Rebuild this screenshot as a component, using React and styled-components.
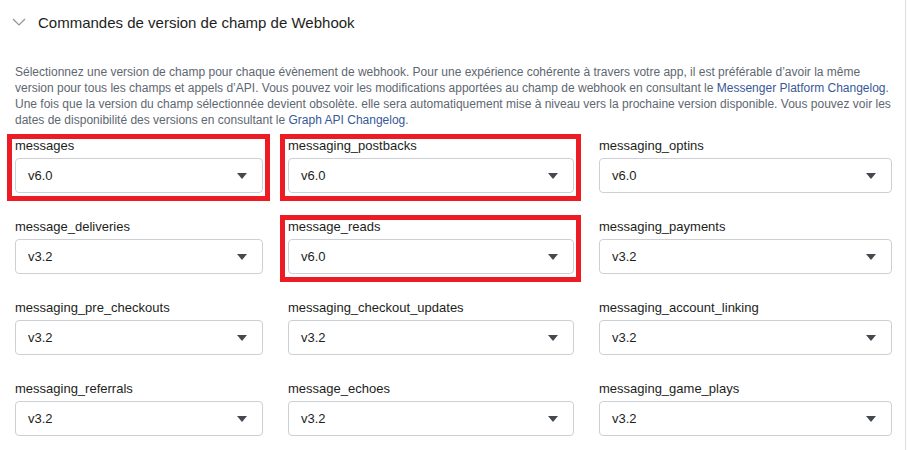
import styled, { createGlobalStyle } from 'styled-components';

const GlobalStyle = createGlobalStyle`
  body {
    margin: 0;
    background: #fff;
    font-family: "Liberation Sans", Arial, sans-serif;
  }
`;

const Panel = styled.div`
  width: 906px;
  height: 450px;
  border-right: 1px solid #dadde1;
  box-sizing: border-box;
  overflow: hidden;
`;

const Header = styled.div`
  display: flex;
  align-items: center;
  gap: 12px;
  height: 44px;
  padding: 0 0 0 12px;
  font-size: 15px;
  color: #1c1e21;
`;

const Description = styled.p`
  margin: 20px 0 0;
  padding: 0 14px 0 15px;
  font-size: 12px;
  line-height: 16px;
  color: #606770;

  a {
    color: #385898;
    text-decoration: none;
  }
`;

const Grid = styled.div`
  display: grid;
  grid-template-columns: 248px 286px 293px;
  column-gap: 25px;
  row-gap: 26px;
  padding: 10px 0 0 15px;
`;

const Field = styled.div`
  position: relative;
  display: flex;
  flex-direction: column;
  gap: 4px;

  ${({ $marked }) =>
    $marked &&
    `
    &::after {
      content: '';
      position: absolute;
      left: -8px;
      right: -7px;
      top: -4px;
      bottom: -8px;
      border: 5px solid #ed1c24;
      pointer-events: none;
    }
  `}
`;

const Label = styled.label`
  font-size: 13px;
  line-height: 16px;
  color: #1c1e21;
  white-space: nowrap;
`;

const Select = styled.div`
  display: flex;
  align-items: center;
  justify-content: space-between;
  height: 35px;
  box-sizing: border-box;
  padding: 0 15px 0 12px;
  border: 1px solid #ccd0d5;
  border-radius: 4px;
  background: #fff;
  font-size: 13px;
  color: #1c1e21;
`;

const Caret = () => (
  <svg width="10" height="6" viewBox="0 0 10 6">
    <path d="M0 0h10L5 6z" fill="#444950" />
  </svg>
);

const Chevron = () => (
  <svg width="14" height="8" viewBox="0 0 14 8">
    <path d="M1 1l6 6 6-6" fill="none" stroke="#90949c" strokeWidth="1.2" />
  </svg>
);

const fields = [
  { name: 'messages', version: 'v6.0', marked: true },
  { name: 'messaging_postbacks', version: 'v6.0', marked: true },
  { name: 'messaging_optins', version: 'v6.0' },
  { name: 'message_deliveries', version: 'v3.2' },
  { name: 'message_reads', version: 'v6.0', marked: true },
  { name: 'messaging_payments', version: 'v3.2' },
  { name: 'messaging_pre_checkouts', version: 'v3.2' },
  { name: 'messaging_checkout_updates', version: 'v3.2' },
  { name: 'messaging_account_linking', version: 'v3.2' },
  { name: 'messaging_referrals', version: 'v3.2' },
  { name: 'message_echoes', version: 'v3.2' },
  { name: 'messaging_game_plays', version: 'v3.2' },
];

const App = () => (
  <Panel>
    <GlobalStyle />
    <Header>
      <Chevron />
      <span>Commandes de version de champ de Webhook</span>
    </Header>
    <Description>
      Sélectionnez une version de champ pour chaque évènement de webhook. Pour une expérience cohérente à
      travers votre app, il est préférable d’avoir la même version pour tous les champs et appels d’API. Vous
      pouvez voir les modifications apportées au champ de webhook en consultant le{' '}
      <a href="#">Messenger Platform Changelog</a>. Une fois que la version du champ sélectionnée devient
      obsolète. elle sera automatiquement mise à niveau vers la prochaine version disponible. Vous pouvez voir
      les dates de disponibilité des versions en consultant le <a href="#">Graph API Changelog</a>.
    </Description>
    <Grid>
      {fields.map((f) => (
        <Field key={f.name} $marked={f.marked}>
          <Label>{f.name}</Label>
          <Select>
            <span>{f.version}</span>
            <Caret />
          </Select>
        </Field>
      ))}
    </Grid>
  </Panel>
);

export default App;
